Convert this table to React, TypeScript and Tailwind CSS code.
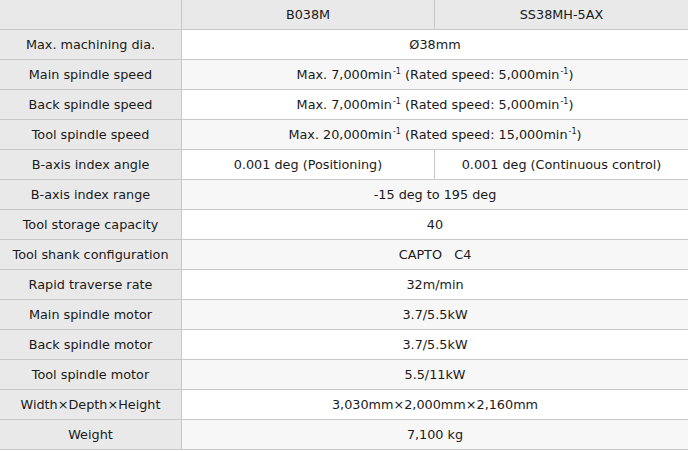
const font = { fontFamily: '"DejaVu Sans", Verdana, sans-serif' };

type Row = { label: string; cells: React.ReactNode[] };

const Min = () => (
  <>
    min<sup className="text-[8px] -top-[5px] ml-[1px]">-1</sup>
  </>
);

const rows: Row[] = [
  { label: 'Max. machining dia.', cells: ['Ø38mm'] },
  {
    label: 'Main spindle speed',
    cells: [<>Max. 7,000<Min /> (Rated speed: 5,000<Min />)</>],
  },
  {
    label: 'Back spindle speed',
    cells: [<>Max. 7,000<Min /> (Rated speed: 5,000<Min />)</>],
  },
  {
    label: 'Tool spindle speed',
    cells: [<>Max. 20,000<Min /> (Rated speed: 15,000<Min />)</>],
  },
  { label: 'B-axis index angle', cells: ['0.001 deg (Positioning)', '0.001 deg (Continuous control)'] },
  { label: 'B-axis index range', cells: ['-15 deg to 195 deg'] },
  { label: 'Tool storage capacity', cells: ['40'] },
  { label: 'Tool shank configuration', cells: ['CAPTO\u00a0\u00a0\u00a0C4'] },
  { label: 'Rapid traverse rate', cells: ['32m/min'] },
  { label: 'Main spindle motor', cells: ['3.7/5.5kW'] },
  { label: 'Back spindle motor', cells: ['3.7/5.5kW'] },
  { label: 'Tool spindle motor', cells: ['5.5/11kW'] },
  { label: 'Width×Depth×Height', cells: ['3,030mm×2,000mm×2,160mm'] },
  { label: 'Weight', cells: ['7,100 kg'] },
];

export default function App() {
  return (
    <div className="w-[688px] h-[451px] bg-white text-[#1a1a1a] text-[12.8px]" style={font}>
      {/* header */}
      <div className="flex h-[30px] border-b border-[#c8c8c8] bg-[#e9e9e9]">
        <div className="w-[182px] border-r border-[#c8c8c8]" />
        <div className="w-[253px] border-r border-[#c8c8c8] flex items-center justify-center">B038M</div>
        <div className="flex-1 flex items-center justify-center">SS38MH-5AX</div>
      </div>

      {rows.map((r, i) => (
        <div
          key={r.label}
          className={`flex h-[30px] border-b border-[#c8c8c8] ${i % 2 === 0 ? 'bg-white' : 'bg-[#f7f7f7]'}`}
        >
          <div className="w-[182px] border-r border-[#c8c8c8] bg-[#e9e9e9] flex items-center justify-center">
            {r.label}
          </div>
          {r.cells.length === 1 ? (
            <div className="flex-1 flex items-center justify-center">
              <span>{r.cells[0]}</span>
            </div>
          ) : (
            <>
              <div className="w-[253px] border-r border-[#c8c8c8] flex items-center justify-center">
                <span>{r.cells[0]}</span>
              </div>
              <div className="flex-1 flex items-center justify-center">
                <span>{r.cells[1]}</span>
              </div>
            </>
          )}
        </div>
      ))}
    </div>
  );
}
